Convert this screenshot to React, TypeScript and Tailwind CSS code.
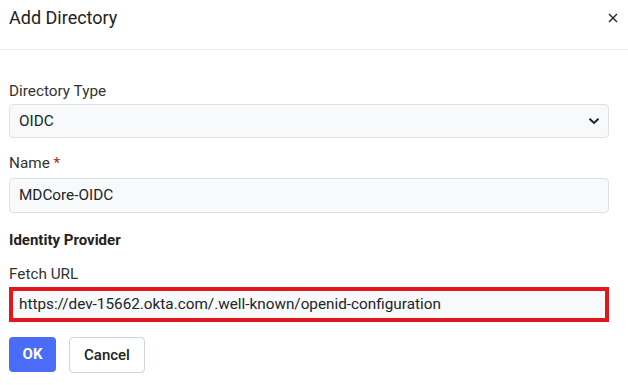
import React from "react";

export default function App() {
  const font = { fontFamily: "Roboto, 'Noto Sans', sans-serif" };
  return (
    <div className="w-[628px] h-[385px] bg-white text-[#212529]" style={font}>
      <div className="h-[50px] border-b border-[#e9ecef] flex items-start justify-between pl-[9px] pr-[10px]">
        <div className="text-[18px] leading-[24px] mt-[6px] text-[#222]">Add Directory</div>
        <svg width="10" height="10" viewBox="0 0 10 10" className="mt-[13px]">
          <path d="M1 1L9 9M9 1L1 9" stroke="#222" strokeWidth="1.4" />
        </svg>
      </div>
      <div className="pl-[9px] pr-[19px] flex flex-col text-[15.3px]">
        <div className="leading-[20px] mt-[31px] text-[#333]">Directory Type</div>
        <div className="mt-[3px] h-[34px] rounded-[4px] border border-[#dee2e6] bg-[#f8f9fa] flex items-center justify-between pl-[9px] pr-[8px]">
          <span>OIDC</span>
          <svg width="12" height="8" viewBox="0 0 12 8">
            <path d="M1.5 1.8L6 6L10.5 1.8" stroke="#222" strokeWidth="2" fill="none" />
          </svg>
        </div>
        <div className="leading-[20px] mt-[15px] text-[#333]">
          Name <span className="text-[#b02a37]">*</span>
        </div>
        <div className="mt-[5px] h-[35px] rounded-[4px] border border-[#dee2e6] bg-[#f8f9fa] flex items-center pl-[9px]">
          MDCore-OIDC
        </div>
        <div className="leading-[20px] mt-[17px] font-bold text-[#222] text-[15px]">Identity Provider</div>
        <div className="leading-[20px] mt-[14px] text-[#333]">Fetch URL</div>
        <div className="mt-[3px] h-[35px] border-[4px] border-[#e3161b] bg-[#f8f9fa] flex items-center pl-[6px] w-[600px]">
          https://dev-15662.okta.com/.well-known/openid-configuration
        </div>
        <div className="mt-[15px] flex gap-[13px]">
          <button className="h-[35px] w-[47px] rounded-[4px] bg-[#4a6cf7] text-white font-bold text-[15px]">OK</button>
          <button className="h-[36px] w-[76px] rounded-[4px] bg-white border border-[#ced4da] text-[#222] font-medium text-[15px]">Cancel</button>
        </div>
      </div>
    </div>
  );
}
